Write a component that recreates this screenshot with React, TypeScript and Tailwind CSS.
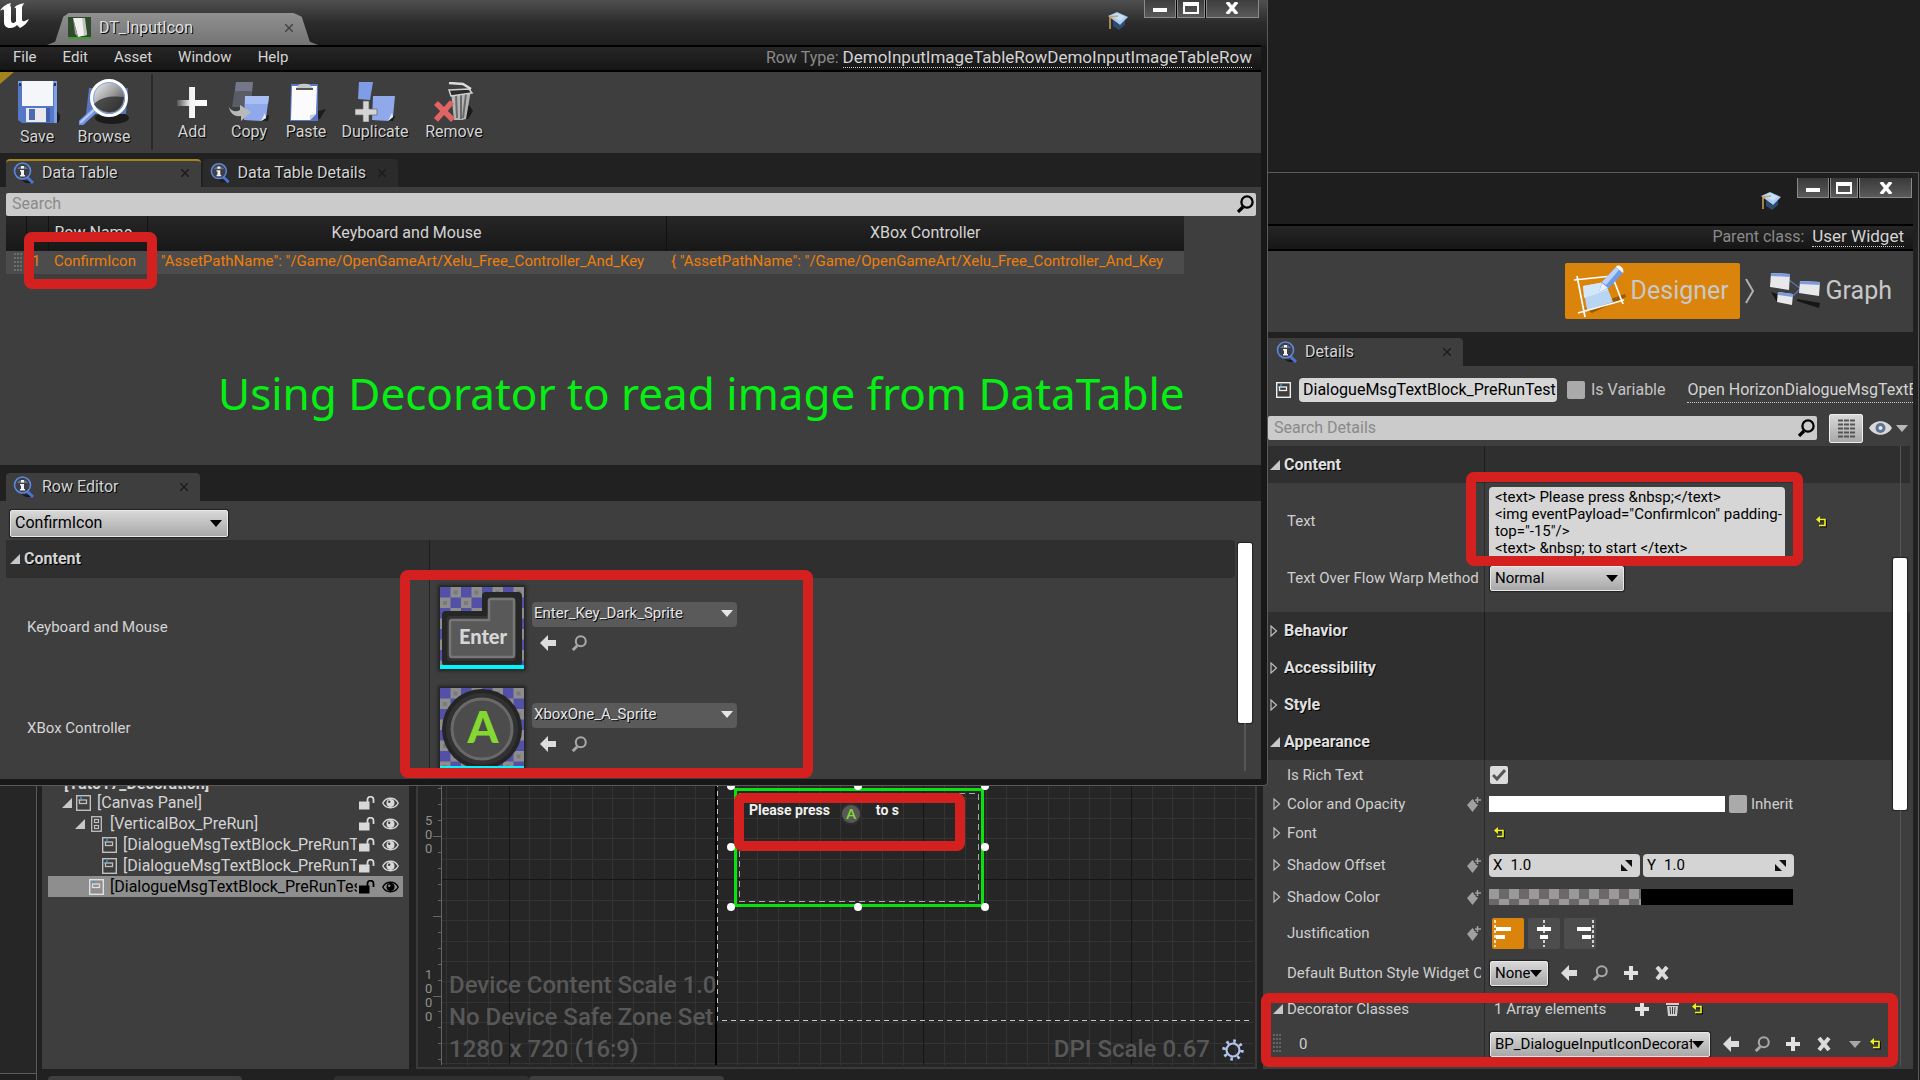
import type { ReactNode } from "react";

const SHADOW = "[text-shadow:1px_1px_0_#000]";

/* ---------- icons ---------- */

function UnrealLogo() {
  return (
    <svg width="30" height="26" viewBox="0 0 30 26" fill="#fff" aria-hidden="true">
      <path d="M0 8C2 4 6 1 11 0c-1 2-1 3 0 4v13c0 2 1 3 2 3s2-.6 3-1.500V6c0-1-.6-1.500-1.600-1.200C16 2 20 1 24.500 0 23 2 22 3 22 5v11c0 2 1 2.600 2.200 2.200L29 16c-1.600 4-5 7-9 9l-3-3c-1.500 2-4 3-7 3-4 0-6-2.500-6-6V7.500C4 6 2 6.200 0 8Z" />
    </svg>
  );
}

function TableAssetIcon() {
  return (
    <svg width="23" height="22" viewBox="0 0 23 22" aria-hidden="true">
      <rect width="23" height="22" fill="#2f4a2c" />
      <rect y="20" width="23" height="2" fill="#3f9b2f" />
      <path d="M5 1h11l3 17-9 2Z" fill="#f0f0ee" />
      <path d="M5 1l5 19-3-3Z" fill="#9a9a98" />
      <path d="M14 1h3l2 17-3 .6Z" fill="#c3c3c0" />
    </svg>
  );
}

function CapIcon() {
  return (
    <svg width="20" height="20" viewBox="0 0 20 20" aria-hidden="true">
      <path d="M5 9l6 5 6-5v5l-6 5-6-4Z" fill="#2f4a6d" />
      <path d="M0 5l9-4 11 5-8 8Z" fill="#a9cbef" />
      <path d="M3 5l6-3 8 4-5 4Z" fill="#c7e0f8" />
      <path d="M10 5L2 6v12" fill="none" stroke="#c9a25c" strokeWidth="1.500" />
    </svg>
  );
}

function InfoIcon() {
  return (
    <svg width="22" height="22" viewBox="0 0 22 22" aria-hidden="true">
      <path d="M8 18l8 1 5 2-8 0Z" fill="#1a1a1a" />
      <path d="M14 15l6 6" stroke="#4a73d6" strokeWidth="3" />
      <circle cx="9.500" cy="9" r="8" fill="#3b3f49" stroke="#5f86dc" strokeWidth="1.600" />
      <path d="M4 7a6 5 0 0 1 11 0Z" fill="#6b717e" />
      <path d="M8 4h3v2.400H8zM7 8h4v5h1v1.600H7V13h1V9.500H7Z" fill="#f2f2f2" />
    </svg>
  );
}

function SaveIcon() {
  return (
    <svg width="46" height="46" viewBox="-3 0 46 46" aria-hidden="true">
      <path d="M4 42l37 1 3-6-4-6Z" fill="#1c1c1c" />
      <path d="M1 1h39v42H5l-4-3Z" fill="#5577c8" />
      <path d="M1 1h39v42h-3V4H1Z" fill="#7f9fe6" />
      <rect x="5" y="1" width="31" height="25" fill="#f5f6fa" />
      <rect x="2" y="3" width="2" height="3" fill="#23345f" />
      <rect x="37" y="3" width="2" height="3" fill="#23345f" />
      <rect x="9" y="28" width="20" height="14" fill="#e9e9ec" />
      <rect x="12" y="29" width="6" height="11" fill="#4a69b5" />
      <rect x="29" y="28" width="4" height="14" fill="#3f5fae" />
    </svg>
  );
}

function BrowseIcon() {
  return (
    <svg width="50" height="46" viewBox="0 0 50 46" aria-hidden="true">
      <defs>
        <linearGradient id="lens" x1="0" y1="0" x2="1" y2="1">
          <stop offset="0" stopColor="#fff" />
          <stop offset=".5" stopColor="#9a9a9a" />
          <stop offset="1" stopColor="#1f1f1f" />
        </linearGradient>
      </defs>
      <ellipse cx="33" cy="39" rx="17" ry="6" fill="#1b1b1b" />
      <path d="M10 9h39l-2 26H7Z" fill="#5a75b8" />
      <path d="M16 31L2 44" stroke="#7295e4" strokeWidth="6" strokeLinecap="round" />
      <path d="M16 30L2 43" stroke="#b9ccf7" strokeWidth="2" strokeLinecap="round" />
      <circle cx="30" cy="19" r="17.500" fill="url(#lens)" stroke="#fff" strokeWidth="3" />
      <circle cx="30" cy="19" r="15.500" fill="none" stroke="#8aa7e8" />
      <path d="M15 25c8-8 20-8 30-7-1 9-7 15-15 15-7 0-13-4-15-8Z" fill="#2b2b2b" opacity=".75" />
    </svg>
  );
}

function AddIcon() {
  return (
    <svg width="40" height="40" viewBox="0 0 40 40" aria-hidden="true">
      <defs>
        <linearGradient id="plus" x1="0" y1="0" x2="1" y2="0">
          <stop offset="0" stopColor="#555" />
          <stop offset=".45" stopColor="#f3f3f3" />
          <stop offset="1" stopColor="#fff" />
        </linearGradient>
      </defs>
      <path d="M17 5h6v13h12v6H23v12h-6V24H5v-6h12Z" fill="url(#plus)" />
    </svg>
  );
}

function CopyIcon() {
  return (
    <svg width="40" height="40" viewBox="0 0 40 40" aria-hidden="true">
      <path d="M17 37l22 2 1-6Z" fill="#1a1a1a" />
      <path d="M7 0h17l-2 25H3Z" fill="#5a5c66" />
      <path d="M7 0h17l-1 9H6Z" fill="#74778a" />
      <path d="M16 14h24l-3 22-5 3-17-1Z" fill="#8fa9ea" />
      <path d="M16 14h24l-1 8H16Z" fill="#a9bef2" />
      <path d="M32 39l5-3-1-5Z" fill="#e4ebfb" />
      <path d="M0 25c3 5 7 5 11 3v-5l11 7-10 9v-5C5 35 1 31 0 25Z" fill="#b9b9b9" />
    </svg>
  );
}

function PasteIcon() {
  return (
    <svg width="40" height="40" viewBox="0 0 40 40" aria-hidden="true">
      <path d="M22 38l12-1 6-10-8 2Z" fill="#1d1d1d" />
      <path d="M5 2h27v37H4Z" fill="#5876c4" />
      <path d="M6 4h25l-1 28-6 6H5Z" fill="#fbfbfd" />
      <path d="M24 38l6-6-6 1Z" fill="#c9cfe2" />
      <path d="M12 4c0-3 12-3 13 0l2 2H10Z" fill="#c7c7c7" />
      <path d="M10 7h17" stroke="#555" strokeWidth="2" />
    </svg>
  );
}

function DuplicateIcon() {
  return (
    <svg width="40" height="40" viewBox="0 0 40 40" aria-hidden="true">
      <path d="M17 37l21 2 2-5Z" fill="#1a1a1a" />
      <path d="M4 0h14l-3 18-12-1Z" fill="#7f9de6" />
      <path d="M18 14h22l-2 21-5 4-16-1Z" fill="#8fa9ea" />
      <path d="M33 39l5-4-1-4Z" fill="#e4ebfb" />
      <path d="M8 19h6v8h8v6h-8v7H8v-7H0v-6h8Z" fill="#d4d4d4" stroke="#666" strokeWidth=".7" />
    </svg>
  );
}

function RemoveIcon() {
  return (
    <svg width="40" height="40" viewBox="0 0 40 40" aria-hidden="true">
      <path d="M22 36l12 1 5-8-4-6Z" fill="#1b1b1b" />
      <path d="M17 10l20-2-5 29-4 1H20Z" fill="#b4b4b4" />
      <path d="M22 13l1 23M27 13v24M32 12l-3 24" stroke="#6a6a6a" strokeWidth="2" />
      <path d="M15 8l20-1 3 4-21 3Z" fill="#2b2b2b" stroke="#d0d0d0" strokeWidth="1.500" />
      <path d="M15 1l14 1 8 5" fill="none" stroke="#dcdcdc" strokeWidth="2.500" />
      <path d="M2 21l17 17M18 20L2 38" stroke="#e06464" strokeWidth="5.500" />
    </svg>
  );
}

function DesignerIcon() {
  return (
    <svg width="54" height="54" viewBox="0 0 54 54" aria-hidden="true">
      <path d="M12 44l40-14 1 3-34 16Z" fill="#9a5a05" />
      <path d="M10 22l22-4 8 20-26 8Z" fill="#b8d6f3" />
      <path d="M10 22l22-4 3 8-24 8Z" fill="#d3e7fa" />
      <path d="M1 16l38-4M4 12l8 41M5 49l46-13M40 14l10 26" fill="none" stroke="#fff" strokeWidth="1.700" />
      <path d="M26 28l3-10L43 3l7 6-14 15Z" fill="#6d9be8" />
      <path d="M29 18L43 3l3 3-13 15Z" fill="#b9d3fa" />
      <path d="M43 3c2-4 9 1 7 6Z" fill="#fff" />
      <path d="M26 28l3-9 6 5Z" fill="#e8f0fc" />
    </svg>
  );
}

function GraphIcon() {
  return (
    <svg width="52" height="38" viewBox="0 0 52 38" aria-hidden="true">
      <path d="M2 20l6 2v8ZM28 27l23 4-1 5-22-7Z" fill="#161616" />
      <path d="M20 8l12 9M24 24l8-8" stroke="#5b6fae" strokeWidth="1.500" />
      <path d="M2 1l19 1-1 16-19-3Z" fill="#e8e8ea" />
      <path d="M2 1l19 1v3L2 4Z" fill="#7f9be0" />
      <path d="M31 9l20 1-1 14-20-3Z" fill="#e8e8ea" />
      <path d="M31 9l20 1v3l-20-1Z" fill="#7f9be0" />
      <path d="M9 20l15 2-1 11-15-3Z" fill="#e8e8ea" />
      <path d="M9 20l15 2v3L9 23Z" fill="#7f9be0" />
    </svg>
  );
}

function SearchIcon({ size = 18, color = "#000" }: { size?: number; color?: string }) {
  return (
    <svg width={size} height={size} viewBox="0 0 18 18" fill="none" stroke={color} aria-hidden="true">
      <circle cx="11" cy="7" r="5.600" strokeWidth="2.300" />
      <path d="M7 12l-5 5" strokeWidth="3.200" />
    </svg>
  );
}

function Caret({ color = "#000" }: { color?: string }) {
  return (
    <svg width="12" height="7" viewBox="0 0 12 7" aria-hidden="true">
      <path d="M0 0h12L6 7Z" fill={color} />
    </svg>
  );
}

function ArrowIcon() {
  return (
    <svg width="16" height="16" viewBox="0 0 16 16" aria-hidden="true">
      <path d="M0 8l8-8v5h8v6H8v5Z" fill="#dcdcdc" />
    </svg>
  );
}

function PlusIcon() {
  return (
    <svg width="14" height="14" viewBox="0 0 14 14" aria-hidden="true">
      <path d="M5 0h4v5h5v4H9v5H5V9H0V5h5Z" fill="#e2e2e2" />
    </svg>
  );
}

function CrossIcon() {
  return (
    <svg width="14" height="14" viewBox="0 0 14 14" aria-hidden="true">
      <path d="M2 1l10 12M12 1L2 13" stroke="#dcdcdc" strokeWidth="4" />
    </svg>
  );
}

function TrashIcon() {
  return (
    <svg width="13" height="14" viewBox="0 0 13 14" aria-hidden="true">
      <path d="M4 0h5v1h4v2H0V1h4ZM1 4h11l-1 10H2Z" fill="#d0d0d0" />
      <path d="M4 5l.5 7M6.500 5v7M9 5l-.5 7" stroke="#3e3e3e" />
    </svg>
  );
}

function ResetIcon() {
  return (
    <svg width="11" height="12" viewBox="0 0 11 12" fill="none" aria-hidden="true">
      <path d="M3 4.500h7v6H4" stroke="#111" strokeWidth="2" />
      <path d="M2 3.500h7v6H3" stroke="#f0f020" strokeWidth="1.600" />
      <path d="M0 3.500L4 0v7Z" fill="#f0f020" />
    </svg>
  );
}

function KeyIcon() {
  return (
    <svg width="14" height="16" viewBox="0 0 14 16" className="shrink-0" aria-hidden="true">
      <path d="M0 9l5.500-6L11 9l-5.500 7Z" fill="#a0a0a0" />
      <path d="M10.500 0v8M7 4h7" stroke="#3e3e3e" strokeWidth="3.500" />
      <path d="M10.500 1v6M8 4h6" stroke="#a0a0a0" strokeWidth="1.500" />
    </svg>
  );
}

function OpenArrow() {
  return (
    <svg width="10" height="10" viewBox="0 0 10 10" aria-hidden="true">
      <path d="M10 0v10H0Z" fill="#c8c8c8" />
    </svg>
  );
}

function ClosedArrow() {
  return (
    <svg width="8" height="12" viewBox="0 0 8 12" fill="none" aria-hidden="true">
      <path d="M1 1v10l5.500-5Z" stroke="#bdbdbd" strokeWidth="1.200" />
    </svg>
  );
}

function WidgetIcon({ color = "#c0c0c0" }: { color?: string }) {
  return (
    <svg width="15" height="16" viewBox="0 0 15 16" fill="none" className="shrink-0" aria-hidden="true">
      <rect x=".7" y=".7" width="13.600" height="14.600" stroke={color} strokeWidth="1.400" />
      <rect x="3.500" y="5" width="7" height="3.500" stroke={color} strokeWidth="1.300" />
      <path d="M5 2v2M2 5h1" stroke="#2e9be0" strokeWidth="1.500" />
    </svg>
  );
}

function VBoxIcon() {
  return (
    <svg width="15" height="16" viewBox="0 0 15 16" fill="none" stroke="#c0c0c0" className="shrink-0" aria-hidden="true">
      <rect x="2.700" y=".7" width="9.600" height="14.600" strokeWidth="1.300" />
      <rect x="5.500" y="3.500" width="4" height="3" strokeWidth="1.200" />
      <rect x="5.500" y="9.500" width="4" height="3" strokeWidth="1.200" />
    </svg>
  );
}

function LockIcon({ color }: { color: string }) {
  return (
    <svg width="16" height="14" viewBox="0 0 16 14" aria-hidden="true">
      <rect y="5.500" width="10.500" height="8" fill={color} />
      <path d="M8.500 6V3.500a3 2.800 0 0 1 6 0V7" fill="none" stroke={color} strokeWidth="1.800" />
    </svg>
  );
}

function EyeIcon({ color, hole }: { color: string; hole: string }) {
  return (
    <svg width="17" height="12" viewBox="0 0 17 12" aria-hidden="true">
      <path d="M.8 6C4-.4 13-.4 16.200 6 13 12.400 4 12.400.8 6Z" fill={hole} stroke={color} strokeWidth="1.400" />
      <circle cx="8.500" cy="6" r="4" fill={color} />
      <circle cx="7.200" cy="4.700" r="1.200" fill={hole} />
    </svg>
  );
}

function DragDots() {
  return (
    <svg width="8" height="20" viewBox="0 0 8 20" aria-hidden="true">
      {[0, 3, 6].map((x) => (
        <path key={x} d={`M${x + 1} 0v20`} stroke="#8c8c8c" strokeDasharray="2 2" />
      ))}
    </svg>
  );
}

function GearIcon() {
  return (
    <svg width="22" height="22" viewBox="0 0 22 22" fill="none" stroke="#b4c2ee" aria-hidden="true">
      <circle cx="11" cy="11" r="6.500" strokeWidth="2.200" />
      <circle cx="11" cy="11" r="9" strokeWidth="3.500" strokeDasharray="2.600 4.460" />
    </svg>
  );
}

function Checker({ id }: { id: string }) {
  return (
    <>
      <defs>
        <pattern id={id} width="21" height="21" patternUnits="userSpaceOnUse">
          <rect width="21" height="21" fill="#8d8d8d" />
          <path d="M0 0h10.500v10.500H0ZM10.500 10.500H21V21H10.500Z" fill="#5350a8" />
          <path d="M13.500 3.500h4v4h-4ZM3 14h4v4H3Z" fill="#7a7a7a" />
        </pattern>
      </defs>
      <rect width="84" height="82" fill={`url(#${id})`} />
    </>
  );
}

function EnterThumb() {
  return (
    <svg width="84" height="82" viewBox="0 0 84 82" className="shadow-[0_0_3px_2px_#222]" role="img" aria-label="Enter key">
      <Checker id="checkA" />
      <path d="M6 24h36V9q0-4 4-4h32q4 0 4 4v66q0 4-4 4H6q-4 0-4-4V28q0-4 4-4Z" fill="#262626" />
      <path d="M10 29h35q3 0 3-3V13q0-3 3-3h22q3 0 3 3v57q0 4-4 4H10q-3 0-3-3V32q0-3 3-3Z" fill="#333" />
      <path d="M12 33h37V14q0-2 2-2h21q2 0 2 2v54q0 2-2 2H12q-2 0-2-2V35q0-2 2-2Z" fill="#595959" stroke="#777" strokeWidth="2.500" />
      <text x="43" y="57" textAnchor="middle" fontFamily="Lato, sans-serif" fontWeight="900" fontSize="20" fill="#d6d6d6">Enter</text>
      <rect y="78" width="84" height="4" fill="#00f5ff" />
    </svg>
  );
}

function ButtonThumb() {
  return (
    <svg width="84" height="82" viewBox="0 0 84 82" className="shadow-[0_0_3px_2px_#222]" role="img" aria-label="A button">
      <Checker id="checkB" />
      <circle cx="42" cy="41" r="40" fill="#252525" />
      <circle cx="42" cy="41" r="36" fill="#323232" />
      <circle cx="42" cy="41" r="30" fill="#4c4c4c" stroke="#6a6868" strokeWidth="3" />
      <text x="43" y="55" textAnchor="middle" fontFamily="Lato, sans-serif" fontWeight="900" fontSize="44" fill="#84d832">A</text>
      <rect y="78" width="84" height="4" fill="#00f5ff" />
    </svg>
  );
}

/* ---------- shared pieces ---------- */

function Marker({ className }: { className: string }) {
  return <div className={`pointer-events-none absolute z-10 rounded-lg border-10 border-[#d4201f] ${className}`} />;
}

function WindowButtons() {
  const b = "flex h-full items-center justify-center border border-t-0 border-[#8a8a8a] bg-linear-to-b from-[#3a3a3a] to-[#5a5a5a]";
  return (
    <div className="flex h-5 gap-px rounded-b bg-black">
      <button aria-label="Minimize" className={`w-8 ${b}`}><span className="mt-1 block h-1 w-3.5 bg-white" /></button>
      <button aria-label="Maximize" className={`w-7 ${b}`}><span className="block h-3 w-4 border-2 border-t-4 border-white" /></button>
      <button aria-label="Close" className={`w-[53px] ${b}`}>
        <svg width="14" height="12" viewBox="0 0 14 12" stroke="#fff" strokeWidth="3.500" aria-hidden="true"><path d="M2 0l10 12M12 0L2 12" /></svg>
      </button>
    </div>
  );
}

function Tab({ title, className }: { title: string; className: string }) {
  return (
    <div className={`flex h-7 items-center pl-[7px] ${className}`}>
      <InfoIcon />
      <span className={`ml-[7px] flex-1 whitespace-nowrap ${SHADOW}`}>{title}</span>
      <button aria-label={`Close ${title}`} className="px-3">
        <svg width="8" height="8" viewBox="0 0 8 8" stroke="#1c1c1c" strokeWidth="1.500" aria-hidden="true"><path d="M0 0l8 8M8 0L0 8" /></svg>
      </button>
    </div>
  );
}

function Select({ label, value, className }: { label: string; value: string; className: string }) {
  return (
    <div className={`relative ${className}`}>
      <select aria-label={label} className="h-full w-full appearance-none overflow-hidden rounded-xs border border-[#e8e8e8] bg-linear-to-b from-[#d8d8d8] to-[#a8a8a8] pr-[17px] pb-px pl-1 text-black shadow-[0_0_1px_1px_#222]">
        <option>{value}</option>
      </select>
      <span className="pointer-events-none absolute inset-y-0 right-1.5 flex items-center"><Caret /></span>
    </div>
  );
}

function IconButton({ label, children }: { label: string; children: ReactNode }) {
  return <button aria-label={label} className="flex h-5 w-[31px] items-center justify-center">{children}</button>;
}

/* ---------- data table window ---------- */

const TOOLS = [
  { label: "Add", icon: <AddIcon />, width: "w-[58px]" },
  { label: "Copy", icon: <CopyIcon />, width: "w-14" },
  { label: "Paste", icon: <PasteIcon />, width: "w-[58px]" },
  { label: "Duplicate", icon: <DuplicateIcon />, width: "w-20" },
  { label: "Remove", icon: <RemoveIcon />, width: "w-[78px]" },
];

const PATH_TEXT = '{ "AssetPathName": "/Game/OpenGameArt/Xelu_Free_Controller_And_Key';

function AssetRow({ label, asset, thumb }: { label: string; asset: string; thumb: ReactNode }) {
  return (
    <div className="flex h-[101px]">
      <div className="flex w-[424px] items-center border-r border-[#262626] pb-0.5 pl-[21px]">{label}</div>
      <div className="flex items-center gap-2 pb-0.5 pl-2.5">
        {thumb}
        <div className="flex flex-col gap-1.5">
          <button className={`flex h-[25px] w-[205px] items-center justify-between rounded bg-[#5a5a5a] pr-1 pb-0.5 pl-0.5 text-[#e6e6e6] ${SHADOW}`}>
            {asset}<Caret color="#e6e6e6" />
          </button>
          <div className="flex">
            <IconButton label="Use selected asset"><ArrowIcon /></IconButton>
            <IconButton label="Browse to asset"><SearchIcon size={16} color="#a8a8a8" /></IconButton>
          </div>
        </div>
      </div>
    </div>
  );
}

function DataTableWindow() {
  return (
    <section className="absolute top-0 left-0 z-20 flex w-[66.04%] flex-col rounded-br border-r border-b border-[#5a5a5a] bg-[#181818] pr-1.5 pb-1.5">
      <header className="-mr-1.5 flex h-[45px] bg-linear-to-b from-[#505050] via-[#2c2c2c] to-[#1e1e1e]">
        <div className="w-[47px] pt-[3px]"><UnrealLogo /></div>
        <div className="mt-[13px] flex w-[271px] items-center bg-linear-to-b from-[#909090] to-[#747474] pb-0.5 pl-[21px] [clip-path:polygon(0_100%,3%_90%,6%_12%,8%_0,91%_0,94%_12%,97%_90%,100%_100%)]">
          <TableAssetIcon />
          <span className={`ml-2 flex-1 text-[#e0e0e0] ${SHADOW}`}>DT_InputIcon</span>
          <button aria-label="Close DT_InputIcon" className="mr-[25px]">
            <svg width="8" height="8" viewBox="0 0 8 8" stroke="#444" strokeWidth="1.500" aria-hidden="true"><path d="M0 0l8 8M8 0L0 8" /></svg>
          </button>
        </div>
        <div className="ml-auto flex gap-4 pr-2">
          <span className="mt-[11px]"><CapIcon /></span>
          <div className="-mt-0.5"><WindowButtons /></div>
        </div>
      </header>
      <nav className="flex h-[27px] items-center border-y-2 border-black bg-linear-to-b from-[#262626] to-[#161616] pr-[9px] pb-0.5 pl-[13px]">
        <div className="flex gap-[26px]">
          {["File", "Edit", "Asset", "Window", "Help"].map((m) => <button key={m} className="text-[15px]">{m}</button>)}
        </div>
        <span className="ml-auto text-[#8a8a8a]">Row Type:</span>
        <a href="#row-type" className="ml-1 border-b border-dotted border-[#d0d0d0] text-[17px] leading-[19px]">DemoInputImageTableRowDemoInputImageTableRow</a>
      </nav>
      <div className="relative flex h-[81px] bg-[#3e3e3e] pl-[9px]">
        <span className="absolute top-0 left-0 h-3 w-3.5 bg-[#a5831c] [clip-path:polygon(0_0,100%_0,0_100%)]" />
        <button className={`flex w-14 flex-col items-center pt-2 leading-[21px] ${SHADOW}`}><SaveIcon />Save</button>
        <button className={`flex w-[78px] flex-col items-center pt-[7px] leading-[23px] ${SHADOW}`}><BrowseIcon />Browse</button>
        <span className="mt-0.5 mr-2.5 ml-2 h-[76px] w-0.5 bg-[#2a2a2a]" />
        {TOOLS.map((t) => (
          <button key={t.label} className={`flex flex-col items-center pt-2.5 leading-5 ${t.width} ${SHADOW}`}>{t.icon}{t.label}</button>
        ))}
      </div>
      <div className="flex h-[34px] items-end gap-0.5 bg-[#212121] pl-1.5">
        <Tab title="Data Table" className="w-[195px] rounded-t border-t-2 border-[#a5831c] bg-[#3e3e3e] pb-0.5" />
        <Tab title="Data Table Details" className="w-[195px] rounded-t bg-[#2b2b2b]" />
      </div>
      <div className="h-[278px] bg-[#3e3e3e] pt-[5px] pr-[5px] pl-1.5">
        <div className="relative">
          <input aria-label="Search" placeholder="Search" className="h-[23px] w-full rounded-xs bg-[#cbcbcb] px-1.5 text-black placeholder:text-[#8a8a8a]" />
          <span className="absolute inset-y-0 right-0.5 flex items-center"><SearchIcon /></span>
        </div>
        <table className="w-[1178px] table-fixed">
          <thead>
            <tr className="h-[35px] bg-linear-to-b from-[#262626] to-[#181818]">
              <th className="w-5 border-r border-[#111]" />
              <th className="w-[22px] border-r border-[#111]" />
              <th className="w-[99px] border-r border-[#111] pb-0.5 pl-1.5 text-left font-normal">Row Name</th>
              <th className="w-[519px] border-r border-[#111] pb-0.5 text-center font-normal">Keyboard and Mouse</th>
              <th className="pb-0.5 text-center font-normal">XBox Controller</th>
            </tr>
          </thead>
          <tbody>
            <tr className="h-[23px] bg-[#4c4c4c] text-[15px] leading-[21px] whitespace-nowrap text-[#ee7f0a]">
              <td className="pl-2"><DragDots /></td>
              <td className="pb-0.5 pl-1.5">1</td>
              <td className="relative pb-0.5 pl-1.5">
                ConfirmIcon
                <Marker className="-top-[19px] -bottom-[15px] -left-6 w-[133px]" />
              </td>
              <td className="overflow-hidden pb-0.5 pl-[5px]">{PATH_TEXT}</td>
              <td className="overflow-hidden pb-0.5 pl-[5px]">{PATH_TEXT}</td>
            </tr>
          </tbody>
        </table>
        <p className="mt-[89px] pl-[212px] font-['Noto_Sans',sans-serif] text-[44px] leading-[60px] text-[#06ee14]">Using Decorator to read image from DataTable</p>
      </div>
      <div className="flex h-9 items-end bg-[#212121] pl-1.5">
        <Tab title="Row Editor" className="w-[194px] rounded-t bg-[#3e3e3e]" />
      </div>
      <div className="flex h-[278px] bg-[#3e3e3e] pt-[9px] pl-1.5">
        <div className="flex-1">
          <Select label="Row" value="ConfirmIcon" className="mb-[3px] ml-1 h-[27px] w-[218px]" />
          <div className="flex h-[38px] rounded-r bg-[#2f2f2f]">
            <div className="flex w-[424px] items-center border-r border-[#1c1c1c] pl-1">
              <OpenArrow /><h2 className={`ml-1 font-bold ${SHADOW}`}>Content</h2>
            </div>
          </div>
          <div className="relative h-[202px] text-[15px]">
            <div className="h-full overflow-hidden">
              <AssetRow label="Keyboard and Mouse" asset="Enter_Key_Dark_Sprite" thumb={<EnterThumb />} />
              <AssetRow label="XBox Controller" asset="XboxOne_A_Sprite" thumb={<ButtonThumb />} />
            </div>
            <Marker className="-top-2 bottom-0.5 left-[394px] w-[413px]" />
          </div>
        </div>
        <div className="flex w-[26px] flex-col items-center pt-[33px] pr-1.5 pb-2">
          <span className="h-[180px] w-3.5 rounded-xs bg-white shadow-[0_0_1px_1px_#222]" />
          <span className="w-0.5 flex-1 bg-[#555]" />
        </div>
      </div>
    </section>
  );
}

/* ---------- widget designer window ---------- */

const TREE = [
  { name: "[Canvas Panel]", pad: "pl-3.5", open: true, box: false, selected: false },
  { name: "[VerticalBox_PreRun]", pad: "pl-[27px]", open: true, box: true, selected: false },
  { name: "[DialogueMsgTextBlock_PreRunTest]", pad: "pl-[54px]", open: false, box: false, selected: false },
  { name: "[DialogueMsgTextBlock_PreRunTest]", pad: "pl-[54px]", open: false, box: false, selected: false },
  { name: "[DialogueMsgTextBlock_PreRunTest]", pad: "pl-[41px]", open: false, box: false, selected: true },
];

function Hierarchy() {
  return (
    <div className="w-[367px] bg-[#3e3e3e] px-1.5 pt-[443px]">
      <div className="flex h-[17px] items-center pl-4 leading-[17px] font-bold">[Tuto17_Decoration]</div>
      <ul>
        {TREE.map((n, i) => (
          <li key={i} className={`flex h-[21px] items-center pr-1 leading-[21px] ${n.pad} ${n.selected ? "bg-[#8e8e8e] text-black" : ""}`}>
            {n.open && <span className="w-3.5"><OpenArrow /></span>}
            {n.box ? <VBoxIcon /> : <WidgetIcon color={n.selected ? "#e0e0e0" : "#c0c0c0"} />}
            <span className="ml-1.5 flex-1 overflow-hidden whitespace-nowrap">{n.name}</span>
            <button aria-label="Toggle lock" className="ml-0.5"><LockIcon color={n.selected ? "#000" : "#d8d8d8"} /></button>
            <button aria-label="Toggle visibility" className="ml-[7px]"><EyeIcon color={n.selected ? "#000" : "#d8d8d8"} hole={n.selected ? "#8e8e8e" : "#3e3e3e"} /></button>
          </li>
        ))}
      </ul>
    </div>
  );
}

const range = (n: number) => Array.from({ length: n }, (_, i) => i);

function CanvasGrid() {
  return (
    <svg className="absolute -top-0.5 -left-0.5 h-full w-full" aria-hidden="true">
      <g shapeRendering="crispEdges">
        {range(40).map((i) => {
          const x = Math.round(92.6 + (i - 3) * 20.74);
          return <path key={i} d={`M${x} 0V735`} stroke="#343434" />;
        })}
        {range(36).map((i) => {
          const y = Math.round(547.3 + (i - 26) * 20.43);
          return <path key={i} d={`M25 ${y}H838`} stroke="#343434" />;
        })}
        {[93, 507, 715].map((x) => <path key={x} d={`M${x} 0V735`} stroke="#151515" />)}
        <path d="M25 547H838" stroke="#151515" />
        <path d="M300 0V735" stroke="#000" strokeWidth="2" />
        <path d="M301 0V688H838" fill="none" stroke="#c8c8c8" strokeDasharray="5 4" />
        <path d="M25 0V735" stroke="#666" />
        {range(18).map((i) => {
          const y = Math.round(504 + (i - 3) * 15.95);
          return <path key={i} d={`M${i % 5 === 3 ? 17 : 22} ${y}h${i % 5 === 3 ? 8 : 3}`} stroke="#666" />;
        })}
      </g>
    </svg>
  );
}

const HANDLES = [
  "left-[309px] top-[448px]", "left-[436px] top-[448px]", "left-[563px] top-[448px]",
  "left-[309px] top-[509px]", "left-[563px] top-[509px]",
  "left-[309px] top-[569px]", "left-[436px] top-[569px]", "left-[563px] top-[569px]",
];

function DesignSurface() {
  const ruler = "absolute left-[7px] flex w-2 flex-col text-[13px] leading-[14px] text-[#909090]";
  return (
    <div className="relative flex-1 overflow-hidden border-2 border-[#3a3a3a] bg-[#262626]">
      <CanvasGrid />
      <div className={`top-[480px] ${ruler}`}><span>5</span><span>0</span><span>0</span></div>
      <div className={`top-[634px] ${ruler}`}><span>1</span><span>0</span><span>0</span><span>0</span></div>
      <div className="absolute bottom-0.5 left-[31px] text-2xl leading-8 font-medium text-[#585858]">
        <p>Device Content Scale 1.0</p>
        <p>No Device Safe Zone Set</p>
        <p>1280 x 720 (16:9)</p>
      </div>
      <div className="absolute right-[11px] bottom-0.5 flex items-center gap-3 text-2xl leading-8 font-medium text-[#585858]">
        DPI Scale 0.67
        <button aria-label="Viewport settings" className="mt-0.5"><GearIcon /></button>
      </div>
      <div className="absolute top-[454px] left-[316px] h-[119px] w-[250px] border-3 border-[#0ce010]">
        <svg className="block h-full w-full" aria-hidden="true">
          <rect x="2" y="2" width="239" height="108" fill="none" stroke="#a8a8a8" strokeWidth="1" strokeDasharray="6 4" shapeRendering="crispEdges" />
        </svg>
      </div>
      {HANDLES.map((h) => <span key={h} className={`absolute size-2 rounded-full bg-white ${h}`} />)}
      <div className="absolute top-[466px] left-[331px] flex text-[14px] leading-5 font-bold text-[#f0f0f0]">
        Please press
        <svg width="22" height="24" viewBox="0 0 22 24" className="mt-0.5 mr-3.5 ml-2.5" role="img" aria-label="A button">
          <circle cx="11" cy="12" r="11" fill="#2e2e2e" />
          <circle cx="11" cy="12" r="9" fill="#585858" />
          <text x="11" y="17" textAnchor="middle" fontFamily="Lato, sans-serif" fontWeight="700" fontSize="14" fill="#84d832">A</text>
        </svg>
        to s
      </div>
      <Marker className="top-[459px] left-[316px] h-[58px] w-[231px]" />
    </div>
  );
}

function Category({ title, open }: { title: string; open?: boolean }) {
  return (
    <div className="mr-[3px] flex h-[37px] bg-[#2f2f2f]">
      <div className="flex w-[222px] items-center border-r border-[#1c1c1c] pl-[7px]">
        <span className="w-3.5">{open ? <OpenArrow /> : <ClosedArrow />}</span>
        <h2 className={`font-bold ${SHADOW}`}>{title}</h2>
      </div>
    </div>
  );
}

function Prop({ label, height, arrow, bind, children }: { label: ReactNode; height: string; arrow?: "open" | "closed"; bind?: boolean; children?: ReactNode }) {
  return (
    <div className={`flex ${height}`}>
      <div className="flex w-[222px] items-center border-r border-[#2a2a2a] pr-[3px] pl-2.5">
        <span className="w-3.5 shrink-0">{arrow === "open" ? <OpenArrow /> : arrow === "closed" ? <ClosedArrow /> : null}</span>
        <span className="flex-1 overflow-hidden whitespace-nowrap">{label}</span>
        {bind && <KeyIcon />}
      </div>
      <div className="flex flex-1 items-center pl-1">{children}</div>
    </div>
  );
}

function NumberBox({ axis }: { axis: string }) {
  return (
    <label className="flex h-[23px] w-[151px] items-center rounded bg-[#d4d4d4] pr-2 pl-1 text-black">
      {axis}
      <input defaultValue="1.0" className="ml-2 w-full min-w-0 bg-transparent" />
      <svg width="11" height="11" viewBox="0 0 11 11" className="shrink-0" aria-hidden="true"><path d="M4 0h7v7ZM0 4l7 7H0Z" fill="#111" /></svg>
    </label>
  );
}

function JustifyButton({ label, active, path, line }: { label: string; active?: boolean; path: string; line: number }) {
  return (
    <button aria-label={label} aria-pressed={!!active} className={`flex h-[31px] w-8 items-center justify-center rounded-xs ${active ? "bg-[#db840c]" : "bg-[#4d4d4d]"}`}>
      <svg width="28" height="27" viewBox="0 0 28 27" aria-hidden="true">
        <path d={`M${line} 0v27`} stroke="#fff" strokeWidth="1.500" strokeDasharray="3 2" />
        <path d={path} fill="#fff" />
      </svg>
    </button>
  );
}

function AssetTools() {
  return (
    <>
      <IconButton label="Use selected class"><ArrowIcon /></IconButton>
      <IconButton label="Browse to class"><SearchIcon size={16} color="#a8a8a8" /></IconButton>
      <IconButton label="New class"><PlusIcon /></IconButton>
      <IconButton label="Clear class"><CrossIcon /></IconButton>
    </>
  );
}

const TEXT_VALUE = '<text> Please press &nbsp;</text>\n<img eventPayload="ConfirmIcon" padding-\ntop="-15"/>\n<text> &nbsp; to start </text>';

function Details() {
  return (
    <div className="flex w-[650px] flex-col">
      <div className="flex h-[34px] items-end">
        <Tab title="Details" className="w-[200px] rounded-t bg-[#3e3e3e] pl-[13px]" />
      </div>
      <div className="flex-1 bg-[#3e3e3e]">
        <div className="flex h-[47px] items-center overflow-hidden pt-px pl-[13px] whitespace-nowrap">
          <WidgetIcon color="#f0f0f0" />
          <input aria-label="Widget name" defaultValue="DialogueMsgTextBlock_PreRunTest" className="ml-2 h-6 w-[258px] shrink-0 rounded bg-[#d6d6d6] pl-1 text-black" />
          <label className="flex items-center">
            <input type="checkbox" className="mr-1.5 ml-2.5 size-[18px] appearance-none rounded-xs bg-[#aaa]" />
            <span className="text-[#c4c4c4]">Is Variable</span>
          </label>
          <a href="#source" className="ml-[22px] border-b border-dotted border-[#c8c8c8] leading-6">Open HorizonDialogueMsgTextBlock.h</a>
        </div>
        <div className="mb-[3px] flex h-[30px] items-center pl-[5px]">
          <div className="relative flex-1">
            <input aria-label="Search Details" placeholder="Search Details" className="h-6 w-full rounded-xs bg-[#cbcbcb] px-1.5 text-black placeholder:text-[#8a8a8a]" />
            <span className="absolute inset-y-0 right-0.5 flex items-center"><SearchIcon /></span>
          </div>
          <button aria-label="Property matrix" className="mr-1.5 ml-3 flex h-[29px] w-[34px] items-center justify-center rounded-xs border border-[#eee] bg-linear-to-b from-[#d8d8d8] to-[#a8a8a8]">
            <svg width="17" height="19" viewBox="0 0 17 19" aria-hidden="true">
              {range(5).map((i) => <path key={i} d={`M0 ${i * 4 + 1.500}h17`} stroke="#555" strokeWidth="2" strokeDasharray="5 1" />)}
            </svg>
          </button>
          <button aria-label="View options" className="mr-[5px] flex items-center gap-1">
            <svg width="23" height="14" viewBox="0 0 23 14" aria-hidden="true">
              <path d="M0 7C5-2 18-2 23 7 18 16 5 16 0 7Z" fill="#d8d8d8" /><circle cx="11.500" cy="7" r="5" fill="#5b7394" /><circle cx="11.500" cy="7" r="2" fill="#e8e8e8" />
            </svg>
            <Caret color="#b8b8b8" />
          </button>
        </div>
        <div className="relative text-[15px] text-[#cfcfcf]">
          <div className="text-base text-[#e0e0e0]"><Category title="Content" open /></div>
          <Prop label={<label htmlFor="rich-text">Text</label>} height="h-[77px]">
            <div className="relative self-start pt-1">
              <textarea id="rich-text" wrap="off" defaultValue={TEXT_VALUE} className="block h-[73px] w-[296px] resize-none overflow-hidden rounded bg-[#d6d6d6] py-0.5 pl-1.5 leading-[17px] text-black" />
              <Marker className="-top-[11px] -bottom-1.5 -left-[23px] w-[337px]" />
            </div>
            <button aria-label="Reset Text" className="ml-[31px]"><ResetIcon /></button>
          </Prop>
          <Prop label="Text Over Flow Warp Method" height="h-9"><Select label="Text Over Flow Warp Method" value="Normal" className="ml-px h-[25px] w-[134px]" /></Prop>
          <div className="flex h-4"><div className="w-[222px] border-r border-[#2a2a2a]" /></div>
          <div className="text-base text-[#e0e0e0]">
            <Category title="Behavior" />
            <Category title="Accessibility" />
            <Category title="Style" />
            <Category title="Appearance" open />
          </div>
          <Prop label={<label htmlFor="is-rich">Is Rich Text</label>} height="h-[30px]">
            <span className="relative ml-px size-[18px]">
              <input id="is-rich" type="checkbox" defaultChecked className="block size-[18px] appearance-none rounded-xs bg-[#dcdcdc]" />
              <svg width="14" height="12" viewBox="0 0 14 12" className="pointer-events-none absolute top-[3px] left-0.5" aria-hidden="true"><path d="M1 6l4 4 8-9" fill="none" stroke="#555" strokeWidth="3" /></svg>
            </span>
          </Prop>
          <Prop label="Color and Opacity" height="h-7" arrow="closed" bind>
            <button aria-label="Color and Opacity" className="h-4 w-[236px] bg-white" />
            <label className="flex items-center"><input type="checkbox" className="mr-1 ml-1 size-[18px] appearance-none rounded-xs bg-[#aaa]" />Inherit</label>
          </Prop>
          <Prop label="Font" height="h-[30px]" arrow="closed"><button aria-label="Reset Font" className="ml-[5px]"><ResetIcon /></button></Prop>
          <Prop label="Shadow Offset" height="h-[34px]" arrow="closed" bind><div className="flex gap-[3px]"><NumberBox axis="X" /><NumberBox axis="Y" /></div></Prop>
          <Prop label="Shadow Color" height="h-[30px]" arrow="closed" bind>
            <button aria-label="Shadow Color" className="flex h-4 w-[304px]">
              <span className="h-full flex-1 bg-[repeating-conic-gradient(#6d6868_0_25%,#999_0_50%)] bg-[length:20px_20px]" />
              <span className="h-full flex-1 bg-black" />
            </button>
          </Prop>
          <Prop label="Justification" height="h-[42px]" bind>
            <div className="ml-[3px] flex gap-1">
              <JustifyButton label="Align left" active line={1} path="M2 7h15v4H2ZM2 15h9v4H2Z" />
              <JustifyButton label="Align center" line={14} path="M7 7h14v4H7ZM10 15h8v4h-8Z" />
              <JustifyButton label="Align right" line={27} path="M11 7h14v4H11ZM16 15h9v4h-9Z" />
            </div>
          </Prop>
          <Prop label="Default Button Style Widget Class" height="h-[38px]">
            <Select label="Default Button Style Widget Class" value="None" className="mr-[5px] ml-px h-[25px] w-[58px]" />
            <AssetTools />
          </Prop>
          <div className="relative">
            <Prop label="Decorator Classes" height="h-[34px]" arrow="open">
              <span className="w-[137px] pl-[5px]">1 Array elements</span>
              <IconButton label="Add element"><PlusIcon /></IconButton>
              <IconButton label="Empty array"><TrashIcon /></IconButton>
              <button aria-label="Reset Decorator Classes" className="ml-1"><ResetIcon /></button>
            </Prop>
            <Prop label={<span className="flex items-center gap-4 pl-3">0</span>} height="h-9">
              <Select label="Decorator class 0" value="BP_DialogueInputIconDecorator" className="mr-[5px] ml-px h-[25px] w-[220px]" />
              <AssetTools />
              <IconButton label="Element options"><Caret color="#a8a8a8" /></IconButton>
              <button aria-label="Reset element"><ResetIcon /></button>
            </Prop>
            <span className="absolute bottom-2 left-2.5"><DragDots /></span>
            <Marker className="top-px -bottom-[5px] -left-0.5 w-[637px]" />
          </div>
          <div className="absolute top-0 right-1.5 -bottom-1 flex w-3.5 flex-col items-center">
            <span className="h-[112px] w-px bg-[#555]" />
            <span className="h-[252px] w-full rounded-xs bg-white shadow-[0_0_1px_1px_#222]" />
            <span className="w-px flex-1 bg-[#555]" />
          </div>
        </div>
      </div>
    </div>
  );
}

function DesignerWindow() {
  return (
    <section className="absolute top-[172px] right-px bottom-0 left-9 z-10 flex flex-col border border-b-0 border-[#5a5a5a] bg-[#212121] px-[5px]">
      <header className="flex h-[51px] justify-end gap-4 bg-[#1e1e1e] pt-[5px] pr-px">
        <span className="mt-[13px]"><CapIcon /></span>
        <WindowButtons />
      </header>
      <nav className="flex h-[27px] items-center justify-end gap-2 border-y-2 border-black bg-linear-to-b from-[#262626] to-[#161616] pr-[9px] pb-0.5">
        <span className="text-[#8a8a8a]">Parent class:</span>
        <a href="#parent" className="border-b border-dotted border-[#d0d0d0] text-[17px] leading-[19px]">User Widget</a>
      </nav>
      <div className="flex h-[81px] items-center justify-end bg-[#3e3e3e] pr-[21px] pb-0.5 text-[25px] text-[#c8c8c8]">
        <button className="flex h-14 w-[175px] items-center rounded-xs bg-[#db840c] pl-2"><DesignerIcon /><span className="ml-1">Designer</span></button>
        <svg width="11" height="26" viewBox="0 0 11 26" className="mx-[5px]" fill="none" stroke="#b0b0b0" strokeWidth="2" aria-hidden="true"><path d="M1 1l7 12-7 12" /></svg>
        <button className="ml-2 flex items-center gap-[5px]"><GraphIcon />Graph</button>
      </div>
      <div className="flex min-h-0 flex-1">
        <Hierarchy />
        <div className="mr-1.5 ml-[7px] flex flex-1"><DesignSurface /></div>
        <Details />
      </div>
      <div className="flex h-[11px] items-end pl-1.5">
        <span className="h-1 w-[194px] rounded-t bg-[#3e3e3e]" />
        <span className="ml-[92px] h-1 w-[195px] rounded-t bg-[#303030]" />
        <span className="h-1 w-[195px] rounded-t bg-[#3e3e3e]" />
      </div>
    </section>
  );
}

export default function App() {
  return (
    <main className="relative h-screen min-h-[1080px] w-full overflow-hidden bg-[#1f1f1f] font-[Roboto,sans-serif] text-base text-[#d4d4d4]">
      <div className="absolute bottom-1.5 left-0 h-full w-9 border-b border-[#5a5a5a] bg-[#262626]" />
      <DesignerWindow />
      <DataTableWindow />
    </main>
  );
}
